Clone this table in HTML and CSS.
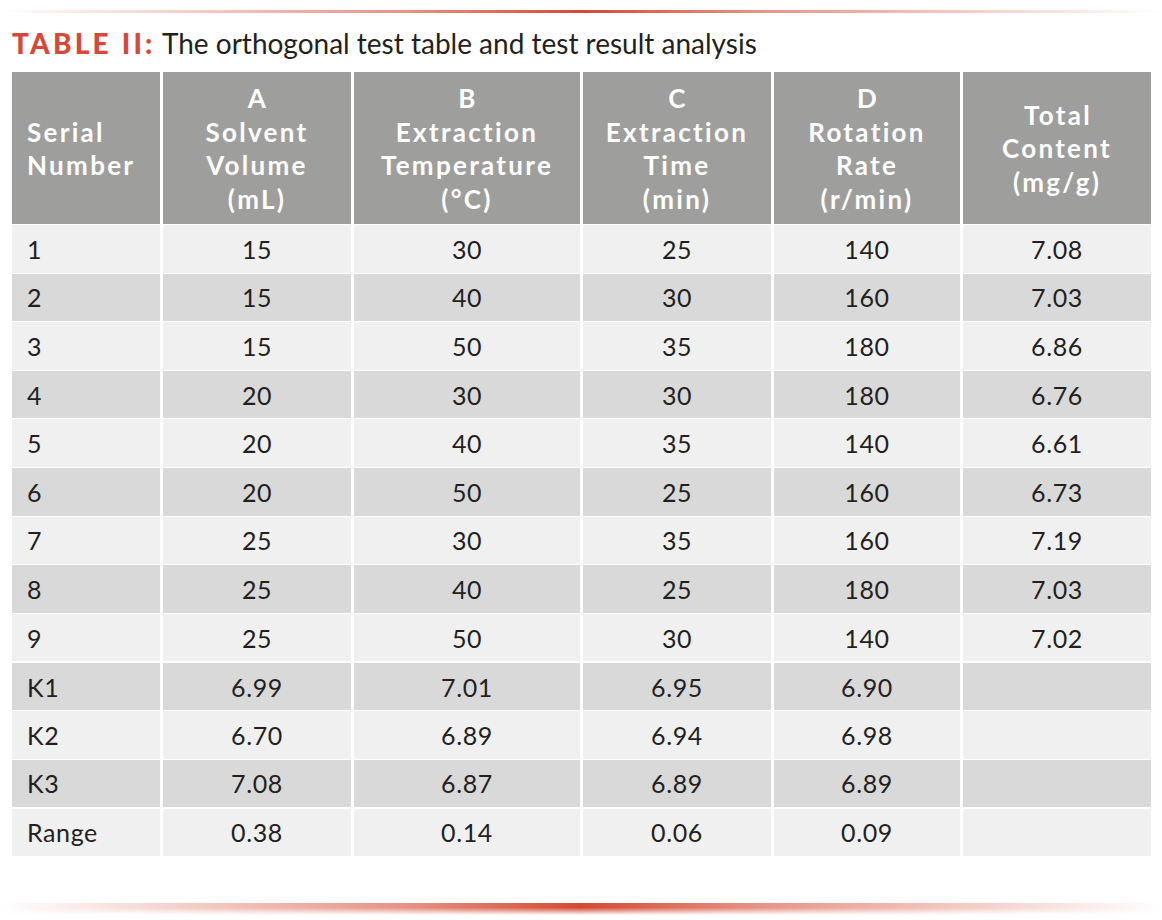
FILE: index.html
```html
<!DOCTYPE html>
<html lang="en">
<head>
<meta charset="utf-8">
<title>TABLE II</title>
<link rel="stylesheet" href="styles.css">
</head>
<body>
<div class="page">
  <div class="rule rule-top"></div>
  <h1 class="caption"><span class="caption-label">TABLE II:</span> The orthogonal test table and test result analysis</h1>
  <table class="data">
    <colgroup>
      <col class="c1"><col class="c2"><col class="c3"><col class="c4"><col class="c5"><col class="c6">
    </colgroup>
    <thead>
      <tr>
        <th class="first">Serial<br>Number</th>
        <th>A<br>Solvent<br>Volume<br>(mL)</th>
        <th>B<br>Extraction<br>Temperature<br>(°C)</th>
        <th>C<br>Extraction<br>Time<br>(min)</th>
        <th>D<br>Rotation<br>Rate<br>(r/min)</th>
        <th>Total<br>Content<br>(mg/g)</th>
      </tr>
    </thead>
    <tbody>
      <tr><td class="first">1</td><td>15</td><td>30</td><td>25</td><td>140</td><td>7.08</td></tr>
      <tr><td class="first">2</td><td>15</td><td>40</td><td>30</td><td>160</td><td>7.03</td></tr>
      <tr><td class="first">3</td><td>15</td><td>50</td><td>35</td><td>180</td><td>6.86</td></tr>
      <tr><td class="first">4</td><td>20</td><td>30</td><td>30</td><td>180</td><td>6.76</td></tr>
      <tr><td class="first">5</td><td>20</td><td>40</td><td>35</td><td>140</td><td>6.61</td></tr>
      <tr><td class="first">6</td><td>20</td><td>50</td><td>25</td><td>160</td><td>6.73</td></tr>
      <tr><td class="first">7</td><td>25</td><td>30</td><td>35</td><td>160</td><td>7.19</td></tr>
      <tr><td class="first">8</td><td>25</td><td>40</td><td>25</td><td>180</td><td>7.03</td></tr>
      <tr><td class="first">9</td><td>25</td><td>50</td><td>30</td><td>140</td><td>7.02</td></tr>
      <tr class="break"><td class="first">K1</td><td>6.99</td><td>7.01</td><td>6.95</td><td>6.90</td><td></td></tr>
      <tr><td class="first">K2</td><td>6.70</td><td>6.89</td><td>6.94</td><td>6.98</td><td></td></tr>
      <tr><td class="first">K3</td><td>7.08</td><td>6.87</td><td>6.89</td><td>6.89</td><td></td></tr>
      <tr class="break"><td class="first">Range</td><td>0.38</td><td>0.14</td><td>0.06</td><td>0.09</td><td></td></tr>
    </tbody>
  </table>
  <div class="rule rule-bottom"></div>
</div>
</body>
</html>
```
FILE: styles.css
```css
html, body {
  margin: 0;
  padding: 0;
  background: #ffffff;
}

.page {
  width: 1162px;
  height: 920px;
  position: relative;
  font-family: "Lato", "Open Sans", sans-serif;
  color: #231f20;
}

.rule {
  background: linear-gradient(to right,
    rgba(214, 74, 52, 0) 0%,
    rgba(214, 74, 52, 0.25) 15%,
    rgba(214, 74, 52, 0.6) 35%,
    #d44a34 50%,
    rgba(214, 74, 52, 0.6) 65%,
    rgba(214, 74, 52, 0.25) 85%,
    rgba(214, 74, 52, 0) 100%);
}

.rule-top {
  height: 3px;
  position: relative;
  top: 10px;
}

.caption {
  margin: 0;
  padding: 25px 0 0 12px;
  height: 48px;
  box-sizing: border-box;
  font-size: 28px;
  line-height: 30px;
  font-weight: 400;
  color: #231f20;
  white-space: nowrap;
}

.caption-label {
  color: #d7483a;
  font-weight: 900;
  letter-spacing: 3.2px;
}

.data {
  margin: 21px 0 0 12px;
  border-collapse: separate;
  border-spacing: 0;
  table-layout: fixed;
  width: 1139px;
}

.c1 { width: 148px; }
.c2 { width: 191px; }
.c3 { width: 229px; }
.c4 { width: 191px; }
.c5 { width: 189px; }
.c6 { width: 191px; }

.data th,
.data td {
  border-left: 3px solid #ffffff;
  padding: 0;
  text-align: center;
}

.data th.first,
.data td.first {
  border-left: none;
  text-align: left;
  padding-left: 15px;
}

.data th {
  background: #9e9e9d;
  color: #ffffff;
  font-weight: 700;
  font-size: 26px;
  line-height: 33.5px;
  letter-spacing: 2.3px;
  text-indent: 2px;
  height: 152px;
  box-sizing: border-box;
  padding-top: 2px;
}

.data th.first {
  text-indent: 0;
}

.data td {
  font-size: 25px;
  font-weight: 400;
  letter-spacing: 0.6px;
  color: #231f20;
  height: 48.6px;
  box-sizing: border-box;
  border-top: 1px solid #ffffff;
  background: #f0f0f0;
  line-height: 30px;
}

.data tbody tr:nth-child(even) td {
  background: #d9d9d9;
}

.data tr.break td {
  border-top: 2px solid #ffffff;
}

.rule-bottom {
  position: absolute;
  left: 0;
  top: 903px;
  width: 1162px;
  height: 12px;
  -webkit-mask-image: linear-gradient(to bottom, #000 0%, #000 40%, rgba(0,0,0,0) 100%);
  mask-image: linear-gradient(to bottom, #000 0%, #000 40%, rgba(0,0,0,0) 100%);
}
```
